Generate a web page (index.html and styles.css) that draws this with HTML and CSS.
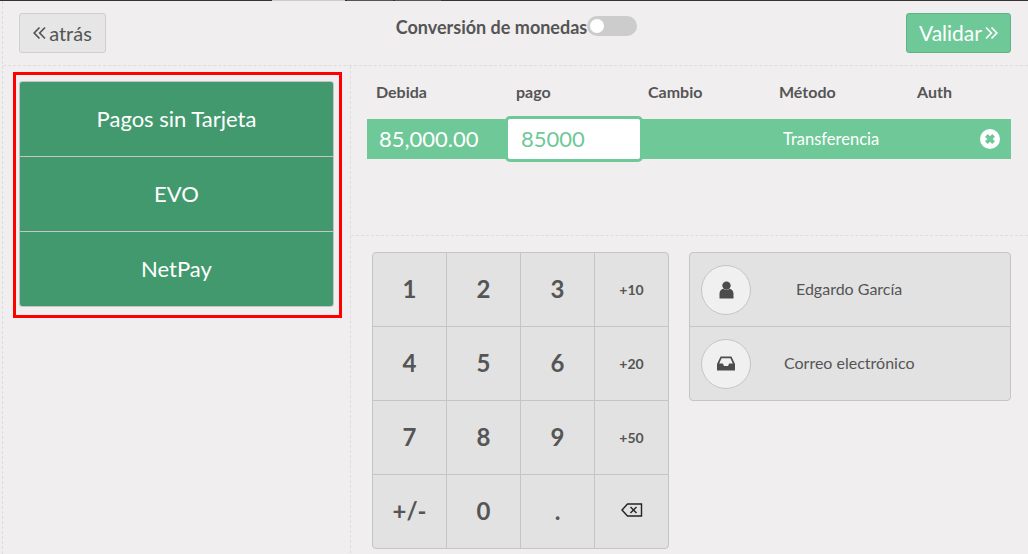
FILE: index.html
```html
<!DOCTYPE html>
<html lang="en">
<head>
    <meta charset="UTF-8">
    <title>Pago</title>
    <link rel="stylesheet" href="styles.css">
</head>
<body>
    <div class="top-line">
        <div class="tab-light"></div>
        <div class="tab-mid"></div>
        <div class="tab-mid"></div>
    </div>
    <div class="screen">
        <div class="top-bar">
            <div class="button back">
                <svg class="chevrons" width="13" height="14" viewBox="0 0 13 14"><path d="M6.5 1.5 1.2 7l5.3 5.5M12 1.5 6.7 7l5.3 5.5" fill="none" stroke="#555" stroke-width="1.7"/></svg>
                atrás
            </div>
            <div class="conversion">
                <span>Conversión de monedas</span>
                <div class="toggle"><div class="knob"></div></div>
            </div>
            <div class="button next">
                <span class="next-label">Validar</span>
                <svg class="chevrons" width="13" height="14" viewBox="0 0 13 14"><path d="M1 1.5 6.3 7 1 12.5M6.5 1.5 11.8 7l-5.3 5.5" fill="none" stroke="#fff" stroke-width="1.7"/></svg>
            </div>
        </div>
        <div class="content">
            <div class="left-pane">
                <div class="highlight">
                    <div class="journals">
                        <div class="journal">Pagos sin Tarjeta</div>
                        <div class="journal">EVO</div>
                        <div class="journal">NetPay</div>
                    </div>
                </div>
            </div>
            <div class="right-pane">
                <div class="paymentlines">
                    <div class="lines-head">
                        <div class="col-due">Debida</div>
                        <div class="col-paid">pago</div>
                        <div class="col-change">Cambio</div>
                        <div class="col-method">Método</div>
                        <div>Auth</div>
                    </div>
                    <div class="line">
                        <div class="line-due">85,000.00</div>
                        <div class="line-input">85000</div>
                        <div class="line-change"></div>
                        <div class="line-method">Transferencia</div>
                        <svg class="remove" width="20" height="20" viewBox="0 0 20 20"><circle cx="10" cy="10" r="10" fill="#fff"/><path d="M6.4 6.4l7.2 7.2M13.6 6.4l-7.2 7.2" stroke="#6ec898" stroke-width="3.8"/></svg>
                    </div>
                </div>
                <div class="lower">
                    <div class="numpad">
                        <div class="key">1</div>
                        <div class="key">2</div>
                        <div class="key">3</div>
                        <div class="key small">+10</div>
                        <div class="key">4</div>
                        <div class="key">5</div>
                        <div class="key">6</div>
                        <div class="key small">+20</div>
                        <div class="key">7</div>
                        <div class="key">8</div>
                        <div class="key">9</div>
                        <div class="key small">+50</div>
                        <div class="key">+/-</div>
                        <div class="key">0</div>
                        <div class="key">.</div>
                        <div class="key erase">
                            <svg width="22" height="14" viewBox="0 0 22 14"><path d="M6.5 1H20.5V13H6.5L1 7Z M9.5 4l6 6M15.5 4l-6 6" fill="none" stroke="#222" stroke-width="1.4"/></svg>
                        </div>
                    </div>
                    <div class="actions">
                        <div class="action">
                            <div class="circle">
                                <svg width="15" height="18" viewBox="0 0 15 18"><circle cx="7.5" cy="4.6" r="4.2" fill="#4c4c4c"/><path d="M0.5 17.5V12.5C0.5 9.8 2.4 8.2 4.4 7.8 5.3 8.6 6.3 9 7.5 9s2.2-.4 3.1-1.2c2 .4 3.9 2 3.9 4.7v5z" fill="#4c4c4c"/></svg>
                            </div>
                            <div class="action-label customer">Edgardo García</div>
                        </div>
                        <div class="action">
                            <div class="circle">
                                <svg width="18" height="15" viewBox="0 0 18 15"><path fill-rule="evenodd" d="M3.6 0.5H14.4L18 8V14.5H0V8ZM4.6 2.2 2.2 7.6H5.8L7 10H11L12.2 7.6H15.8L13.4 2.2Z" fill="#4c4c4c"/></svg>
                            </div>
                            <div class="action-label email">Correo electrónico</div>
                        </div>
                    </div>
                </div>
            </div>
        </div>
    </div>
</body>
</html>
```

FILE: styles.css
```css
* {
    box-sizing: border-box;
}
html, body {
    margin: 0;
    height: 554px;
    overflow: hidden;
}
body {
    background-color: #f0eeef;
    font-family: Lato, sans-serif;
    color: #555;
}
.top-line {
    height: 1px;
    padding-left: 272px;
    display: flex;
    background-color: #333;
}
.tab-light {
    width: 73px;
    background-color: #ccc;
}
.tab-mid {
    width: 46px;
    margin-left: 2px;
    background-color: #555;
}
.screen {
    margin-left: 2px;
    height: 553px;
    border-left: 1px dashed #ddd;
}
.top-bar {
    height: 65px;
    padding: 12px 17px 0 16px;
    display: flex;
    justify-content: space-between;
    align-items: flex-start;
    border-bottom: 1px dashed #ddd;
}
.button {
    height: 40px;
    display: flex;
    align-items: center;
    justify-content: center;
    gap: 3px;
    padding-bottom: 1px;
    font-size: 20px;
    border-radius: 3px;
}
.back {
    width: 87px;
    background-color: #e6e6e6;
    border: 1px solid #cfcfcf;
}
.next {
    width: 105px;
    background-color: #6ec898;
    border: 1px solid #5fb287;
    color: #fff;
}
.next-label {
    font-size: 21px;
}
.conversion {
    display: flex;
    align-items: flex-start;
    margin: 3px 0 0 21px;
    font-size: 18px;
    font-weight: 700;
    line-height: 22px;
    color: #555;
}
.toggle {
    width: 50px;
    height: 20px;
    padding: 3px;
    background-color: #ccc;
    border-radius: 10px;
}
.knob {
    width: 14px;
    height: 14px;
    background-color: #fff;
    border-radius: 50%;
}
.content {
    display: flex;
    height: 487px;
}
.left-pane {
    width: 348px;
    flex-shrink: 0;
    padding: 6px 0 0 10px;
    border-right: 1px dashed #ddd;
}
.highlight {
    width: 329px;
    height: 246px;
    padding: 6px 5px 0 3px;
    border: 3px solid #f00;
}
.journals {
    border: 1px solid #c5c5c5;
    border-radius: 3px;
    overflow: hidden;
}
.journal {
    height: 75px;
    display: flex;
    align-items: center;
    justify-content: center;
    padding-bottom: 2px;
    background-color: #43996e;
    color: #fff;
    font-size: 22px;
    border-bottom: 1px solid #c5c5c5;
}
.journal:last-child {
    height: 74px;
    border-bottom: none;
}
.right-pane {
    width: 677px;
    flex-shrink: 0;
}
.paymentlines {
    height: 170px;
    padding: 0 17px 0 16px;
    border-bottom: 1px dashed #ddd;
}
.lines-head {
    height: 53px;
    padding: 15px 0 0 9px;
    display: flex;
    font-size: 16px;
    font-weight: 700;
    line-height: 22px;
}
.col-due {
    width: 140px;
}
.col-paid {
    width: 132px;
}
.col-change {
    width: 131px;
}
.col-method {
    width: 138px;
}
.line {
    height: 40px;
    display: flex;
    align-items: center;
    padding-right: 11px;
    background-color: #6ec898;
    color: #fff;
    font-size: 16.5px;
}
.line-due {
    width: 138px;
    padding: 0 0 2px 12px;
    font-size: 22px;
}
.line-input {
    width: 138px;
    height: 46px;
    flex-shrink: 0;
    display: flex;
    align-items: center;
    padding: 0 0 2px 13px;
    background-color: #fff;
    border: 3px solid #6ec898;
    border-radius: 5px;
    color: #6ec898;
    font-size: 22px;
}
.line-change {
    width: 140px;
}
.line-method {
    width: 197px;
}
.remove {
    flex-shrink: 0;
}
.lower {
    display: flex;
    padding: 16px 17px 0 21px;
    gap: 20px;
}
.numpad {
    width: 297px;
    height: 297px;
    display: grid;
    grid-template-columns: 74px 74px 74px 73px;
    grid-template-rows: 74px 74px 74px 73px;
    background-color: #e2e2e2;
    border: 1px solid #c5c5c5;
    border-radius: 4px;
}
.key {
    display: flex;
    align-items: center;
    justify-content: center;
    padding-bottom: 2px;
    font-size: 24px;
    font-weight: 700;
    color: #555;
    border-right: 1px solid #c5c5c5;
    border-bottom: 1px solid #c5c5c5;
}
.key:nth-child(4n) {
    border-right: none;
}
.key:nth-last-child(-n+4) {
    border-bottom: none;
}
.key.small {
    padding-bottom: 0;
    font-size: 14px;
}
.key.erase {
    padding-bottom: 4px;
}
.actions {
    width: 322px;
    height: 149px;
    background-color: #e2e2e2;
    border: 1px solid #c5c5c5;
    border-radius: 4px;
}
.action {
    height: 74px;
    display: flex;
    align-items: center;
    padding-left: 11px;
    border-bottom: 1px solid #c5c5c5;
}
.action:last-child {
    height: 73px;
    border-bottom: none;
}
.circle {
    width: 50px;
    height: 50px;
    display: flex;
    align-items: center;
    justify-content: center;
    background-color: #f0f0f0;
    border: 1px solid #c5c5c5;
    border-radius: 50%;
}
.action-label {
    font-size: 16px;
    padding-bottom: 2px;
}
.customer {
    margin-left: 45px;
}
.email {
    margin-left: 33px;
}
```
